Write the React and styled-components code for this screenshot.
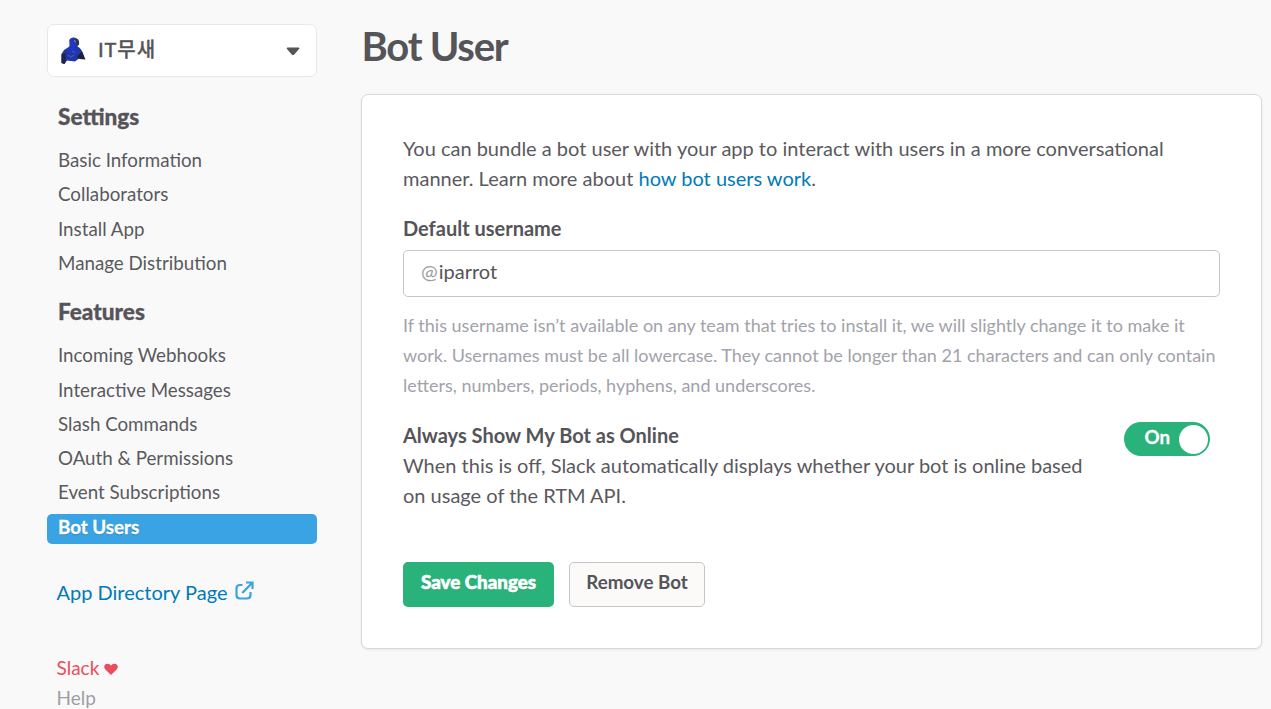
import React from 'react';
import styled, { createGlobalStyle } from 'styled-components';

const GlobalStyle = createGlobalStyle`
  * { box-sizing: border-box; }
  html, body { margin: 0; padding: 0; height: 709px; overflow: hidden; background: #f9f9f9; }
  body { font-family: Lato, 'Noto Sans CJK KR', sans-serif; font-size: 20px; line-height: 30px; color: #555459; }
  a { text-decoration: none; }
`;

const Page = styled.div`
  display: flex;
  height: 709px;
  overflow: hidden;
  padding: 24px 9px 0 47px;
  background: #f9f9f9;
`;

const Sidebar = styled.aside`
  width: 270px;
  flex: none;
  margin-right: 44px;
`;

const AppPicker = styled.button`
  display: flex;
  align-items: center;
  width: 270px;
  height: 53px;
  padding: 0 16px 0 12px;
  background: #fff;
  border: 1px solid #e8e8e8;
  border-radius: 7px;
  font: inherit;
  color: inherit;
`;

const AppName = styled.span`
  flex: 1;
  margin-left: 12px;
  text-align: left;
  font-size: 20px;
  line-height: 30px;
  padding-bottom: 3px;
  font-weight: 500;
  letter-spacing: 0.9px;
  -webkit-text-stroke: 0.3px currentColor;
`;

const NavTitle = styled.h2`
  margin: ${(p) => (p.$first ? '24px' : '16.4px')} 0 0 11px;
  height: 46px;
  font-size: 22.6px;
  line-height: 32px;
  font-weight: 900;
  -webkit-text-stroke: 0.3px currentColor;
`;

const NavItem = styled.a`
  display: block;
  height: 30px;
  margin-bottom: 4.3px;
  padding-left: 11px;
  border-radius: 5px;
  font-size: 18.75px;
  line-height: 26px;
  color: ${(p) => (p.$active ? '#fff' : '#5a595e')};
  background: ${(p) => (p.$active ? '#3aa3e3' : 'transparent')};
  font-weight: ${(p) => (p.$active ? 700 : 400)};
  -webkit-text-stroke: ${(p) => (p.$active ? '0.3px currentColor' : '0')};
  text-shadow: ${(p) => (p.$active ? '0 1px 1px rgba(0, 0, 0, 0.2)' : 'none')};
`;

const DirectoryLink = styled.a`
  display: flex;
  align-items: center;
  margin: 33px 0 0 9.5px;
  color: #007ab8;
  svg { margin: -3px 0 0 8px; }
`;

const FooterLinks = styled.div`
  margin: 46px 0 0 9.5px;
  color: #9e9ea6;
  font-size: 19px;
`;

const FooterRow = styled.div`
  display: flex;
  align-items: center;
  height: 30px;
  color: ${(p) => (p.$love ? '#eb4d5c' : '#9e9ea6')};
  svg { margin: 3px 0 0 5px; }
`;

const Main = styled.main`
  width: 901px;
`;

const Title = styled.h1`
  margin: -3px 0 0 0.5px;
  height: 73px;
  font-size: 40px;
  line-height: 50px;
  font-weight: 700;
  letter-spacing: -1.25px;
`;

const Card = styled.section`
  height: 555px;
  padding: 38px 41px 0;
  background: #fff;
  border: 1px solid #d9d9d9;
  border-radius: 7px;
  box-shadow: 0 1px 2px rgba(0, 0, 0, 0.08);
`;

const Text = styled.p`
  margin: 0;
  white-space: nowrap;
  color: #5a595e;
  a { color: #007ab8; }
  strong { color: #555459; }
`;

const Label = styled.label`
  display: block;
  margin-top: 20px;
  font-weight: 700;
`;

const Field = styled.div`
  display: flex;
  height: 47px;
  margin-top: 7px;
  padding: 5px 17px;
  border: 1px solid #c5c5c7;
  border-radius: 5px;
  span { color: #9e9ea6; margin-right: 1px; }
`;

const Hint = styled.p`
  margin: 13px 0 0;
  color: #a2a2aa;
  font-size: 18px;
  white-space: nowrap;
`;

const OnlineRow = styled.div`
  display: flex;
  justify-content: space-between;
  margin-top: 20px;
  padding-right: 10px;
`;

const Toggle = styled.div`
  display: flex;
  align-items: center;
  justify-content: space-between;
  width: 86px;
  height: 34px;
  margin-top: 2px;
  padding: 0 2px 0 20.5px;
  border-radius: 17px;
  background: #2ab27b;
  color: #fff;
  font-size: 18.75px;
  font-weight: 700;
  -webkit-text-stroke: 0.3px currentColor;
  span { padding-bottom: 5px; }
`;

const Knob = styled.i`
  width: 29px;
  height: 29px;
  margin-top: 1px;
  border-radius: 50%;
  background: #fff;
`;

const Actions = styled.div`
  display: flex;
  gap: 15px;
  margin-top: 52px;
`;

const Button = styled.button`
  width: ${(p) => (p.$primary ? 151 : 136)}px;
  height: 45px;
  padding: 0 0 6px;
  border: ${(p) => (p.$primary ? '0' : '1px solid #c5c5cc')};
  border-radius: 5px;
  background: ${(p) => (p.$primary ? '#2ab27b' : '#fbfaf8')};
  color: ${(p) => (p.$primary ? '#fff' : '#555459')};
  font-family: inherit;
  font-size: 18.75px;
  font-weight: ${(p) => (p.$primary ? 900 : 700)};
  white-space: nowrap;
  -webkit-text-stroke: ${(p) => (p.$primary ? '0.6px currentColor' : '0')};
  text-shadow: ${(p) => (p.$primary ? '0 1px 1px rgba(0, 0, 0, 0.1)' : 'none')};
`;

const Parrot = () => (
  <svg width="26" height="29" viewBox="0 0 26 29">
    <path d="M9.5 4C11 .8 16 .6 17.5 3.5L18.5 8 17.5 10.5C20.5 12 22 15 23 17L25 23 19 22.5 15 25.5 7 24.5 4.5 28 1.5 27 1.5 18 4 14 9.5 10.5Z" fill="#2236a4" />
    <path d="M9.5 4C11 1 15 .8 16 4L15 11 18 14 15 17 9 15 6 17 7 13 10 10Z" fill="#2038bd" />
    <path d="M15 3.2C18 1.2 20 5 18.8 9.5L16.2 7Z" fill="#30343f" />
    <path d="M1.5 18.5L5.5 17 6 24 4.5 28 1.5 27Z" fill="#1c2450" />
    <path d="M17 21L21.5 15.5 25.5 23.5 19.5 23Z" fill="#1d2230" />
    <path d="M8 19L11 21 14 19M12 15L15 17" fill="none" stroke="#4053c4" strokeWidth="1.2" />
    <path d="M14 4L16 5 15 7Z" fill="#8790a0" />
  </svg>
);

const CaretIcon = styled.svg`
  margin-top: 2px;
`;

const Caret = () => (
  <CaretIcon width="14" height="9" viewBox="0 0 14 9">
    <path d="M1.2 .5H12.8Q14 1 13 2.1L8.3 7.4Q7 8.8 5.7 7.4L1 2.1Q0 1 1.2 .5Z" fill="#555459" />
  </CaretIcon>
);

const External = () => (
  <svg width="19" height="19" viewBox="0 0 19 19" fill="none" stroke="#3aa3e3" strokeWidth="2.2">
    <path d="M7.5 4H5Q1.5 4 1.5 7.5V14Q1.5 17.5 5 17.5H12Q15.5 17.5 15.5 14V11M7.3 12L17 2M11 1.5H17.5V8" />
  </svg>
);

const Heart = () => (
  <svg width="14" height="13" viewBox="0 0 14 13">
    <path d="M7 12L1.1 6.2C-.9 3.6.7.7 3.4.7 5.2.7 6.4 1.6 7 2.8 7.6 1.6 8.8.7 10.6.7 13.3.7 14.9 3.6 12.9 6.2Z" fill="#eb4d5c" />
  </svg>
);

const settings = ['Basic Information', 'Collaborators', 'Install App', 'Manage Distribution'];
const features = ['Incoming Webhooks', 'Interactive Messages', 'Slash Commands', 'OAuth & Permissions', 'Event Subscriptions', 'Bot Users'];

export default function App() {
  return (
    <>
      <GlobalStyle />
      <Page>
        <Sidebar>
          <AppPicker><Parrot /><AppName>IT무새</AppName><Caret /></AppPicker>
          <nav>
            <NavTitle $first>Settings</NavTitle>
            {settings.map((t) => <NavItem key={t}>{t}</NavItem>)}
            <NavTitle>Features</NavTitle>
            {features.map((t) => <NavItem key={t} $active={t === 'Bot Users'}>{t}</NavItem>)}
          </nav>
          <DirectoryLink>App Directory Page<External /></DirectoryLink>
          <FooterLinks>
            <FooterRow $love>Slack<Heart /></FooterRow>
            <FooterRow>Help</FooterRow>
          </FooterLinks>
        </Sidebar>
        <Main>
          <Title>Bot User</Title>
          <Card>
            <Text>
              You can bundle a bot user with your app to interact with users in a more conversational<br />
              manner. Learn more about <a>how bot users work</a>.
            </Text>
            <Label>Default username</Label>
            <Field><span>@</span>iparrot</Field>
            <Hint>
              If this username isn’t available on any team that tries to install it, we will slightly change it to make it<br />
              work. Usernames must be all lowercase. They cannot be longer than 21 characters and can only contain<br />
              letters, numbers, periods, hyphens, and underscores.
            </Hint>
            <OnlineRow>
              <Text>
                <strong>Always Show My Bot as Online</strong><br />
                When this is off, Slack automatically displays whether your bot is online based<br />
                on usage of the RTM API.
              </Text>
              <Toggle><span>On</span><Knob /></Toggle>
            </OnlineRow>
            <Actions>
              <Button $primary>Save Changes</Button>
              <Button>Remove Bot</Button>
            </Actions>
          </Card>
        </Main>
      </Page>
    </>
  );
}
